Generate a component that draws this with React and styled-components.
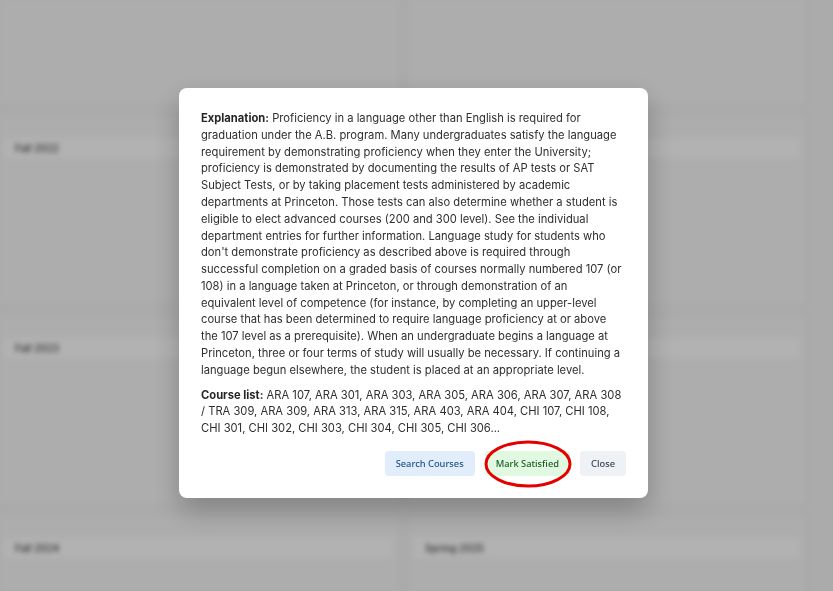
import React from "react";
import styled, { createGlobalStyle } from "styled-components";

const GlobalStyle = createGlobalStyle`
  html, body {
    margin: 0;
    padding: 0;
    height: 100%;
    overflow: hidden;
    background: #f5f5f5;
    font-family: Inter, "Liberation Sans", sans-serif;
  }
`;

const semesters = [
  ["Spring 2022", "Fall 2021"],
  ["Fall 2022", "Spring 2023"],
  ["Fall 2023", "Spring 2024"],
  ["Fall 2024", "Spring 2025"],
];

const explanation =
  "Proficiency in a language other than English is required for graduation under the A.B. program. Many undergraduates satisfy the language requirement by demonstrating proficiency when they enter the University; proficiency is demonstrated by documenting the results of AP tests or SAT Subject Tests, or by taking placement tests administered by academic departments at Princeton. Those tests can also determine whether a student is eligible to elect advanced courses (200 and 300 level). See the individual department entries for further information. Language study for students who don't demonstrate proficiency as described above is required through successful completion on a graded basis of courses normally numbered 107 (or 108) in a language taken at Princeton, or through demonstration of an equivalent level of competence (for instance, by completing an upper-level course that has been determined to require language proficiency at or above the 107 level as a prerequisite). When an undergraduate begins a language at Princeton, three or four terms of study will usually be necessary. If continuing a language begun elsewhere, the student is placed at an appropriate level.";

const courses =
  "ARA 107, ARA 301, ARA 303, ARA 305, ARA 306, ARA 307, ARA 308 / TRA 309, ARA 309, ARA 313, ARA 315, ARA 403, ARA 404, CHI 107, CHI 108, CHI 301, CHI 302, CHI 303, CHI 304, CHI 305, CHI 306...";

const App = () => {
  return (
    <>
      <GlobalStyle />
      <Page>
        <SemesterGrid>
          {semesters.map((row, i) =>
            row.map((name) => (
              <SemesterCard key={name}>
                <SemesterHeader>{i === 0 ? "" : name}</SemesterHeader>
              </SemesterCard>
            ))
          )}
        </SemesterGrid>
      </Page>
      <Overlay>
        <Modal>
          <Paragraph>
            <Label>Explanation:</Label> {explanation}
          </Paragraph>
          <Paragraph>
            <Label>Course list:</Label> {courses}
          </Paragraph>
          <ButtonRow>
            <ActionButton $variant="blue">Search Courses</ActionButton>
            <Marked>
              <ActionButton $variant="green">Mark Satisfied</ActionButton>
              <Circle viewBox="0 0 90 50">
                <ellipse cx="45" cy="25" rx="42" ry="22" fill="none" stroke="#e50000" strokeWidth="3" />
              </Circle>
            </Marked>
            <ActionButton $variant="gray">Close</ActionButton>
          </ButtonRow>
        </Modal>
      </Overlay>
    </>
  );
};

const Page = styled.div`
  height: 591px;
  overflow: hidden;
  filter: blur(2.5px);
`;

const SemesterGrid = styled.div`
  display: grid;
  grid-template-columns: 403px 400px;
  column-gap: 7px;
  row-gap: 10px;
  margin: -85px 0 0 -3px;
`;

const SemesterCard = styled.div`
  height: 190px;
  background: #f8f8f8;
  border: 1px solid #ececec;
  padding-top: 22px;
  box-sizing: border-box;
`;

const SemesterHeader = styled.div`
  height: 20px;
  margin: 0 6px;
  padding-left: 11px;
  background: #ffffff;
  color: #444;
  font-size: 10px;
  font-weight: 500;
  line-height: 20px;
`;

const Overlay = styled.div`
  position: fixed;
  inset: 0;
  background: rgba(0, 0, 0, 0.3);
  display: flex;
  align-items: center;
  justify-content: center;
  padding: 0 6px 5px 0;
`;

const Modal = styled.div`
  width: 469px;
  box-sizing: border-box;
  padding: 22px 24px 22px 22px;
  background: #ffffff;
  border-radius: 8px;
  box-shadow: 0 12px 28px rgba(0, 0, 0, 0.25);
`;

const Paragraph = styled.p`
  margin: 0 0 8px;
  font-size: 11.2px;
  line-height: 16.8px;
  color: #2e2e2e;
`;

const Label = styled.strong`
  font-weight: 700;
  color: #262626;
`;

const ButtonRow = styled.div`
  display: flex;
  justify-content: flex-end;
  gap: 10px;
  margin: 14px -2px 0 0;
`;

const palettes = {
  blue: { bg: "#e2edfb", fg: "#1f4f8a" },
  green: { bg: "#e1f8e1", fg: "#1d5a26" },
  gray: { bg: "#eef1f5", fg: "#3a4150" },
};

const ActionButton = styled.button`
  height: 25px;
  padding: 0 11px;
  border: none;
  border-radius: 4px;
  font-family: "Noto Sans", "Open Sans", sans-serif;
  font-size: 9.3px;
  font-weight: 500;
  background: ${(p) => palettes[p.$variant].bg};
  color: ${(p) => palettes[p.$variant].fg};
  cursor: pointer;
`;

const Marked = styled.div`
  position: relative;
  display: flex;
`;

const Circle = styled.svg`
  position: absolute;
  left: -2px;
  top: -12px;
  width: 90px;
  height: 50px;
  pointer-events: none;
`;

export default App;
